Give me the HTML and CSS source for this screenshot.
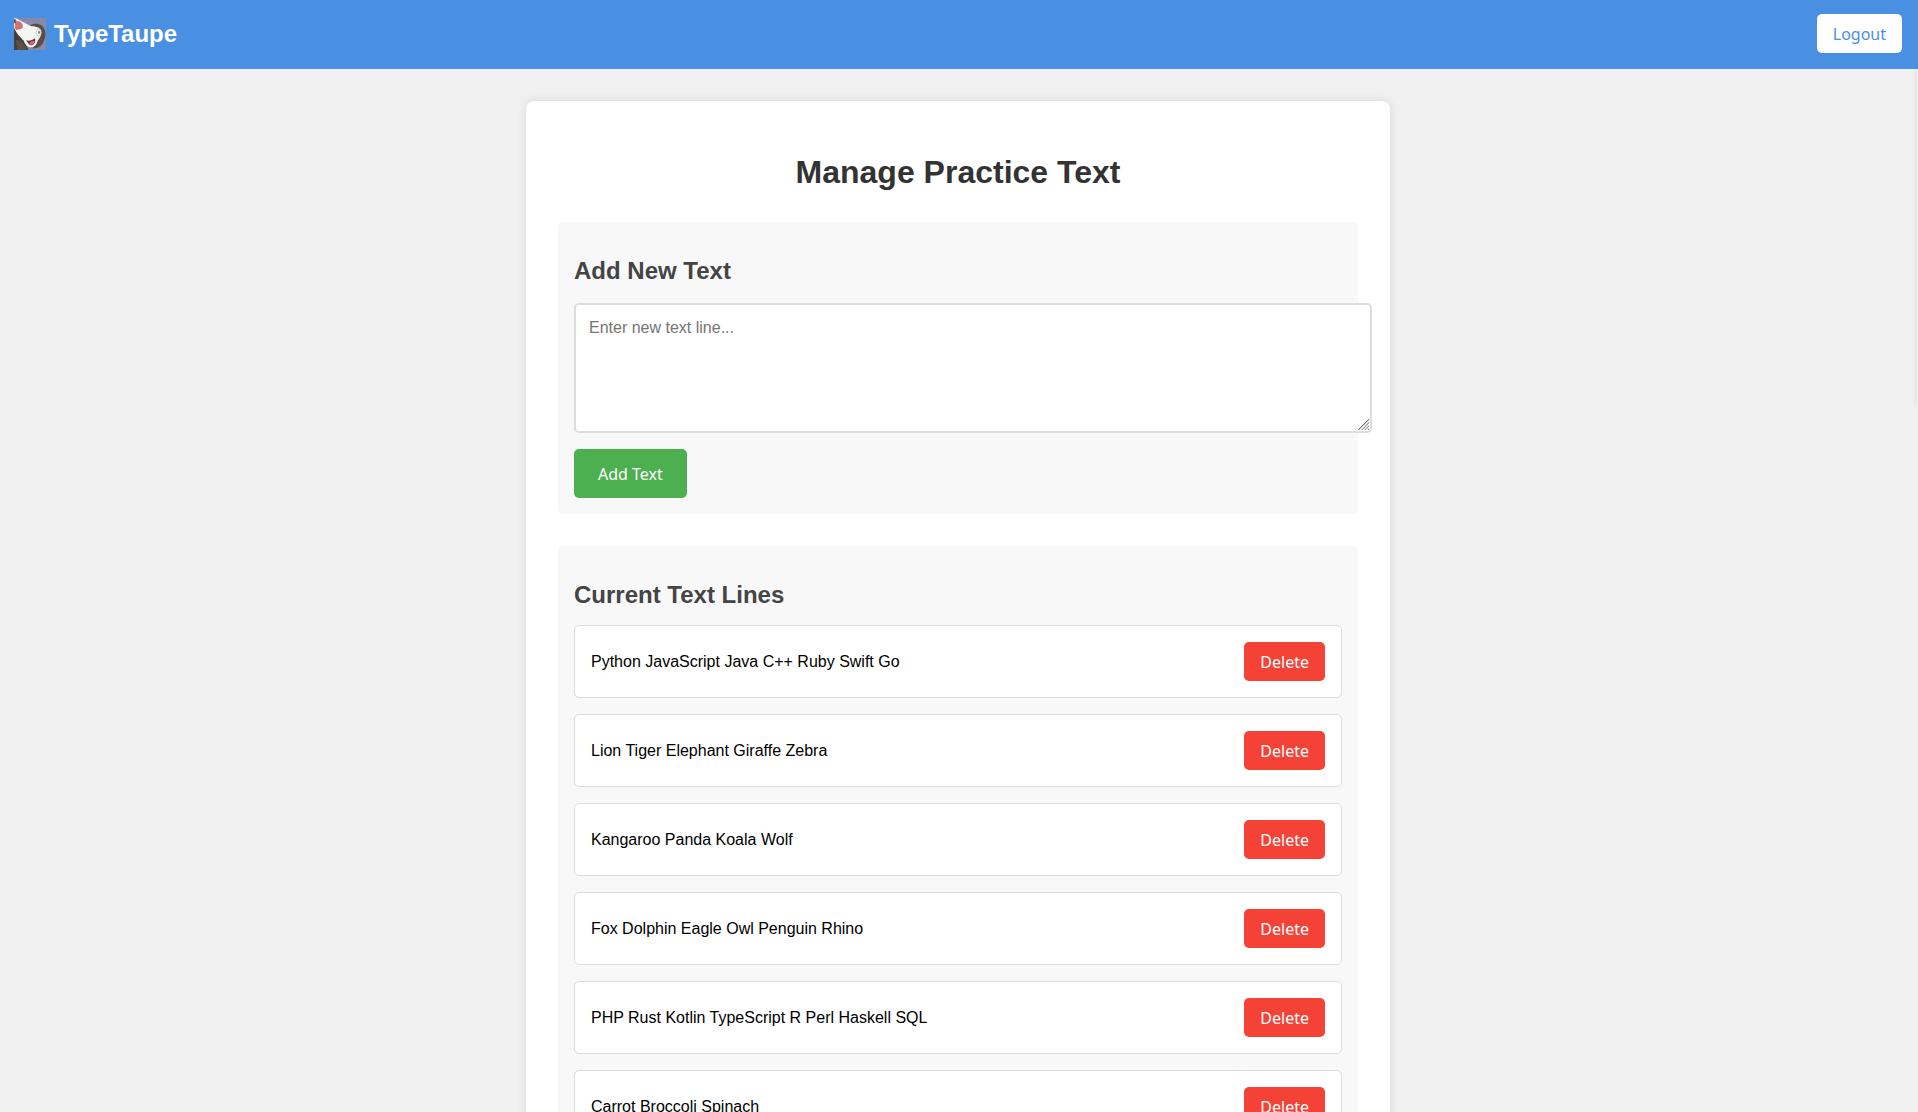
FILE: index.html
```html
<!DOCTYPE html>
<html lang="en">
<head>
<meta charset="utf-8">
<meta name="viewport" content="width=device-width, initial-scale=1">
<title>TypeTaupe</title>
<link rel="stylesheet" href="styles.css">
</head>
<body>
<header class="navbar">
  <div class="brand">
    <svg class="brand-logo" viewBox="0 0 96 96" role="img" aria-label="Laughing mole">
      <rect width="96" height="96" fill="#8589aa"/>
      <path d="M0 30 L20 56 L36 80 L44 96 H0Z" fill="#473d3b"/>
      <path d="M4 66 L22 68 L36 86 L38 96 H12Z" fill="#5c4f49"/>
      <path d="M48 22 C58 15 78 15 87 26 C97 39 97 58 87 74 C80 86 72 91 58 91 L60 60Z" fill="#5a4c46"/>
      <path d="M0 0 L10 3 L27 12 L50 24 C62 25 78 27 82 38 C84 50 77 60 71 68 C68 80 62 87 51 88 C40 88 33 80 29 67 C18 59 6 44 0 28Z" fill="#f5f5f4"/>
      <path d="M3 12 C9 7 20 9 25 18 C29 27 25 33 18 34 L7 36 L2 29Z" fill="#cf7378"/>
      <path d="M0 2 L7 6 L5 15 L0 16Z" fill="#65575b"/>
      <path d="M35 67 C46 70 55 67 63 60 C66 72 60 83 50 82 C43 80 43 73 35 67Z" fill="#70343e"/>
      <path d="M46 76 C49 70 56 68 62 69 C59 79 54 82 49 80Z" fill="#df6870"/>
      <ellipse cx="74" cy="44" rx="7" ry="10" fill="#fff" stroke="#b5aead" stroke-width="2"/>
      <ellipse cx="75" cy="43" rx="2" ry="5" fill="#4b4748"/>
    </svg>
    <span class="brand-name">TypeTaupe</span>
  </div>
  <button class="btn btn-logout" type="button">Logout</button>
</header>
<main class="page">
  <div class="card">
    <h1 class="title">Manage Practice Text</h1>
    <section class="panel">
      <h2 class="panel-title"><label for="new-text">Add New Text</label></h2>
      <form class="add-form">
        <textarea class="text-input" id="new-text" placeholder="Enter new text line..."></textarea>
        <button class="btn btn-add" type="button">Add Text</button>
      </form>
    </section>
    <section class="panel">
      <h2 class="panel-title">Current Text Lines</h2>
      <ul class="lines">
        <li class="line"><span>Python JavaScript Java C++ Ruby Swift Go</span><button class="btn btn-delete" type="button">Delete</button></li>
        <li class="line"><span>Lion Tiger Elephant Giraffe Zebra</span><button class="btn btn-delete" type="button">Delete</button></li>
        <li class="line"><span>Kangaroo Panda Koala Wolf</span><button class="btn btn-delete" type="button">Delete</button></li>
        <li class="line"><span>Fox Dolphin Eagle Owl Penguin Rhino</span><button class="btn btn-delete" type="button">Delete</button></li>
        <li class="line"><span>PHP Rust Kotlin TypeScript R Perl Haskell SQL</span><button class="btn btn-delete" type="button">Delete</button></li>
        <li class="line"><span>Carrot Broccoli Spinach</span><button class="btn btn-delete" type="button">Delete</button></li>
      </ul>
    </section>
  </div>
</main>
<div class="scroll-thumb" aria-hidden="true"></div>
</body>
</html>
```
FILE: styles.css
```css
body {
  margin: 0;
  background: #f0f0f0;
  color: #000;
  font-family: "Liberation Sans", Arial, sans-serif;
  font-size: 16px;
}

html {
  scrollbar-width: none;
}

.navbar {
  display: flex;
  justify-content: space-between;
  align-items: center;
  padding: 14px 16px 16px 14px;
  background: #4a90e2;
}

.brand {
  display: flex;
  align-items: center;
  gap: 8px;
}

.brand-logo {
  width: 32px;
  height: 32px;
}

.brand-name {
  color: #fff;
  font-size: 24px;
  font-weight: bold;
}

.btn {
  padding: 9px 16px 7px;
  border: 0;
  border-radius: 5px;
  color: #fff;
  font-family: "Noto Sans", sans-serif;
  font-size: 16px;
  line-height: 23px;
  cursor: pointer;
}

.btn-logout {
  background: #fff;
  color: #4a90e2;
}

.btn-add {
  padding: 14px 24px 12px;
  background: #4caf50;
}

.btn-delete {
  background: #f44336;
}

.page {
  padding: 32px 2px 32px 0;
}

.card {
  max-width: 800px;
  margin: 0 auto;
  padding: 32px;
  border-radius: 8px;
  background: #fff;
  box-shadow: 0 0 10px rgba(0, 0, 0, 0.1);
}

.title {
  margin: 21px 0 32px;
  color: #333;
  font-size: 32px;
  line-height: 36px;
  text-align: center;
}

.panel {
  padding: 16px;
  border-radius: 5px;
  background: #f8f8f8;
}

.panel + .panel {
  margin-top: 32px;
}

.panel-title {
  margin: 0;
  padding: 19px 0 17px;
  color: #444;
  font-size: 24px;
  line-height: 27px;
}

.text-input {
  display: block;
  box-sizing: content-box;
  width: 100%;
  height: 100px;
  margin: 2px 0 16px;
  padding: 13px;
  border: 2px solid #ddd;
  border-radius: 5px;
  background: #fff;
  font-family: inherit;
  font-size: 16px;
  line-height: 20px;
  resize: vertical;
}

.text-input::-webkit-resizer {
  background:
    linear-gradient(135deg, transparent 48%, #777 50%, #fff 58%, #fff 62%, #777 66%, #fff 73%, #fff 76%, #777 80%, #fff 87%, #fff 90%, #777 95%)
    right 1px bottom 1px / 11px 11px no-repeat;
}

.lines {
  display: flex;
  flex-direction: column;
  gap: 16px;
  margin: 0;
  padding: 0;
  list-style: none;
}

.line {
  display: flex;
  justify-content: space-between;
  align-items: center;
  padding: 16px;
  border: 1px solid #ddd;
  border-radius: 5px;
  background: #fff;
}

.scroll-thumb {
  position: fixed;
  top: 0;
  right: 1px;
  width: 3px;
  height: 405px;
  background: rgba(128, 128, 128, 0.06);
}
```
